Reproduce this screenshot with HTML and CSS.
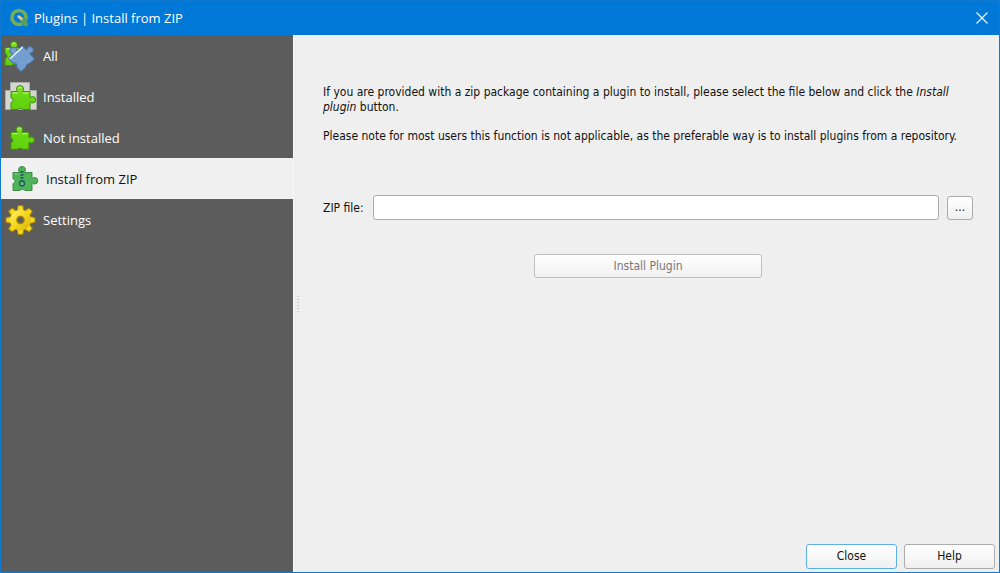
FILE: index.html
```html
<!DOCTYPE html>
<html lang="en">
<head>
<meta charset="utf-8">
<title>Plugins | Install from ZIP</title>
<link rel="stylesheet" href="styles.css">
</head>
<body>
<svg class="defs" aria-hidden="true">
  <defs>
    <path id="piece" d="M2 6.500H8.500C9 6 7.500 5.500 7.500 4A3.500 3.500 0 0 1 14.500 4C14.500 5.500 13 6 13.500 6.500H21V12C21.500 13 22 11.500 23.500 11.500A3 3 0 0 1 23.500 18C22 18 21.500 16.500 21 17.500V24.500H14C14 23.800 13 23.500 11.500 23.500S9 23.800 9 24.500H2V17.500C3 17.500 4 16.800 4 15.200S3 13 2 13Z"/>
    <linearGradient id="green" x1="0" y1="0" x2="0" y2="1"><stop offset="0" stop-color="#8be02a"/><stop offset="0.450" stop-color="#65d813"/><stop offset="1" stop-color="#62d00c"/></linearGradient>
    <linearGradient id="gold" x1="0" y1="0" x2="1" y2="1"><stop offset="0" stop-color="#fff36b"/><stop offset="0.500" stop-color="#f3d71c"/><stop offset="1" stop-color="#d8ae0a"/></linearGradient>
  </defs>
</svg>
<div class="window">
  <header class="titlebar">
    <svg class="logo" viewBox="0 0 20 20" aria-hidden="true">
      <circle cx="10" cy="9.500" r="7" fill="none" stroke="#76ad55" stroke-width="3.600"/>
      <path d="M11 8.500H14L19 14V18.500H15.500L11 13.500Z" fill="#5c9f52" stroke="#0f7ccc" stroke-width="0.600"/>
      <path d="M8.500 7.500H11L13.500 10.500V12H12L8.500 9.500Z" fill="#e2cb9c"/>
    </svg>
    <h1 class="title">Plugins | Install from ZIP</h1>
    <button class="dismiss" type="button" aria-label="Close window">
      <svg viewBox="0 0 12 12" aria-hidden="true"><path d="M0.500 0.500L11.500 11.500M11.500 0.500L0.500 11.500" stroke="#e2f6ff" stroke-width="1.300"/></svg>
    </button>
  </header>
  <div class="content">
    <nav class="sidebar">
      <a class="item" href="#all">
        <svg class="icon" viewBox="0 0 34 34" aria-hidden="true">
          <g transform="translate(0 2)"><use href="#piece" fill="url(#green)" stroke="#3e8c10"/><path d="M3.500 8H9M9 3Q11 1.500 12.500 2.500" fill="none" stroke="#c1f38a"/></g>
          <g transform="translate(6 20) rotate(-43) translate(-2 -7)"><use href="#piece" fill="#729fcf" stroke="#496f9f"/><path d="M2.500 7.500H20" stroke="#e4eff9" stroke-width="1.500"/></g>
        </svg><span>All</span></a>
      <a class="item" href="#installed">
        <svg class="icon" viewBox="0 0 34 34" aria-hidden="true">
          <path d="M7.500 2.500H26.500V10.500H33.500V29.500H2.500V10.500H7.500Z" fill="#d3d7cf" stroke="#a9aca5"/>
          <g transform="translate(6 5)"><use href="#piece" fill="url(#green)" stroke="#3e8c10"/><path d="M3.500 8H9M14 8H19.500M9 3Q11 1.500 12.500 2.500" fill="none" stroke="#c1f38a"/></g>
        </svg><span>Installed</span></a>
      <a class="item" href="#not-installed">
        <svg class="icon" viewBox="0 0 34 34" aria-hidden="true">
          <g transform="translate(6 5) scale(0.950)"><use href="#piece" fill="url(#green)" stroke="#3e8c10"/><path d="M3.500 8H9M14 8H19.500M9 3Q11 1.500 12.500 2.500" fill="none" stroke="#c1f38a"/></g>
        </svg><span>Not installed</span></a>
      <a class="item active" href="#zip" aria-current="page">
        <svg class="icon" viewBox="0 0 34 34" aria-hidden="true">
          <g transform="translate(5 4)"><use href="#piece" fill="#4db457" stroke="#3d8a49"/><path d="M3.500 8H8" stroke="#8bd392"/></g>
          <path d="M16 9V19" stroke="#2a6a68" stroke-width="3" stroke-dasharray="2 1"/>
          <circle cx="16" cy="21.500" r="2.500" fill="#5cba7b" stroke="#205c62" stroke-width="1.300"/>
        </svg><span>Install from ZIP</span></a>
      <a class="item" href="#settings">
        <svg class="icon" viewBox="0 0 34 34" aria-hidden="true">
          <g transform="translate(17.500 17)">
            <g fill="#f4d91f" stroke="#a88409">
              <path id="tooth" d="M-3.500 -9L-2.300 -14.500H2.300L3.500 -9Z"/>
              <use href="#tooth" transform="rotate(45)"/><use href="#tooth" transform="rotate(90)"/><use href="#tooth" transform="rotate(135)"/><use href="#tooth" transform="rotate(180)"/><use href="#tooth" transform="rotate(225)"/><use href="#tooth" transform="rotate(270)"/><use href="#tooth" transform="rotate(315)"/>
            </g>
            <circle r="10.300" fill="url(#gold)"/>
            <circle r="3.500" fill="#5b5b5b" stroke="#9f7e13" stroke-width="1.500"/>
          </g>
        </svg><span>Settings</span></a>
    </nav>
    <div class="splitter" aria-hidden="true"><i></i><i></i><i></i><i></i><i></i><i></i></div>
    <main class="panel">
      <div class="notes">
        <p>If you are provided with a zip package containing a plugin to install, please select the file below and click the <em>Install plugin</em> button.</p>
        <p>Please note for most users this function is not applicable, as the preferable way is to install plugins from a repository.</p>
      </div>
      <form class="form">
        <div class="row">
          <label class="label" for="zip">ZIP file:</label>
          <input class="field" id="zip" type="text">
          <button class="button browse" type="button" aria-label="Browse">...</button>
        </div>
        <button class="button install" type="button" disabled>Install Plugin</button>
      </form>
      <footer class="actions">
        <button class="button action default" type="button">Close</button>
        <button class="button action" type="button">Help</button>
      </footer>
    </main>
  </div>
</div>
</body>
</html>
```

FILE: styles.css
```css
* { box-sizing: border-box; }
body { margin: 0; font: 12px/15px "DejaVu Sans Condensed", "DejaVu Sans", sans-serif; color: #111; }
.defs { position: absolute; width: 0; height: 0; }
.window { min-height: 100vh; display: flex; flex-direction: column; border: 1px solid #0f7ad0; background: #efefef; }
.titlebar { display: flex; align-items: center; height: 34px; padding: 0 11px 0 8px; background: #0078d7; color: #fff; }
.logo { width: 20px; height: 20px; }
.title { flex: 1; margin: 0 0 0 5px; font: 13px/20px "Open Sans", sans-serif; }
.dismiss { display: flex; padding: 0; border: 0; background: none; }
.dismiss svg { width: 12px; height: 12px; }
.content { flex: 1; display: flex; }
.sidebar { flex: 0 0 292px; background: #5c5c5c; }
.item { display: flex; align-items: center; gap: 6px; height: 41px; padding-left: 2px; color: #fff; font: 13px/20px "Open Sans", sans-serif; text-decoration: none; }
.item.active { padding-left: 5px; background: #f0f0f0; color: #111; }
.icon { width: 34px; height: 34px; }
.splitter { flex: 0 0 8px; display: flex; flex-direction: column; align-items: center; justify-content: center; gap: 2px; border-left: 1px solid #f8f8f8; }
.splitter i { width: 2px; height: 1px; background: #c8c8c8; }
.panel { flex: 1; min-width: 0; display: flex; flex-direction: column; }
.notes { padding: 50px 26px 0 22px; }
.notes p { margin: 0 0 14px; }
.form { display: flex; flex-direction: column; align-items: center; padding: 37px 26px 0 22px; }
.row { display: flex; align-items: center; align-self: stretch; gap: 8px; }
.label { padding: 2px 1px 0 0; }
.field { flex: 1; min-width: 0; height: 25px; padding: 0 6px; border: 1px solid #ababab; border-radius: 3px; background: #fff; font: inherit; }
.button { padding: 0; border: 1px solid #acacac; border-radius: 3px; background: linear-gradient(#fff, #f0f0f0); color: #111; font: inherit; }
.browse { width: 26px; height: 24px; }
.install { width: 228px; height: 24px; margin-top: 34px; border-color: #bfbfbf; color: #777; }
.actions { display: flex; justify-content: flex-end; gap: 7px; margin-top: auto; padding: 0 4px 3px; }
.action { width: 91px; height: 25px; }
.default { border-color: #5eb0e4; }
```
